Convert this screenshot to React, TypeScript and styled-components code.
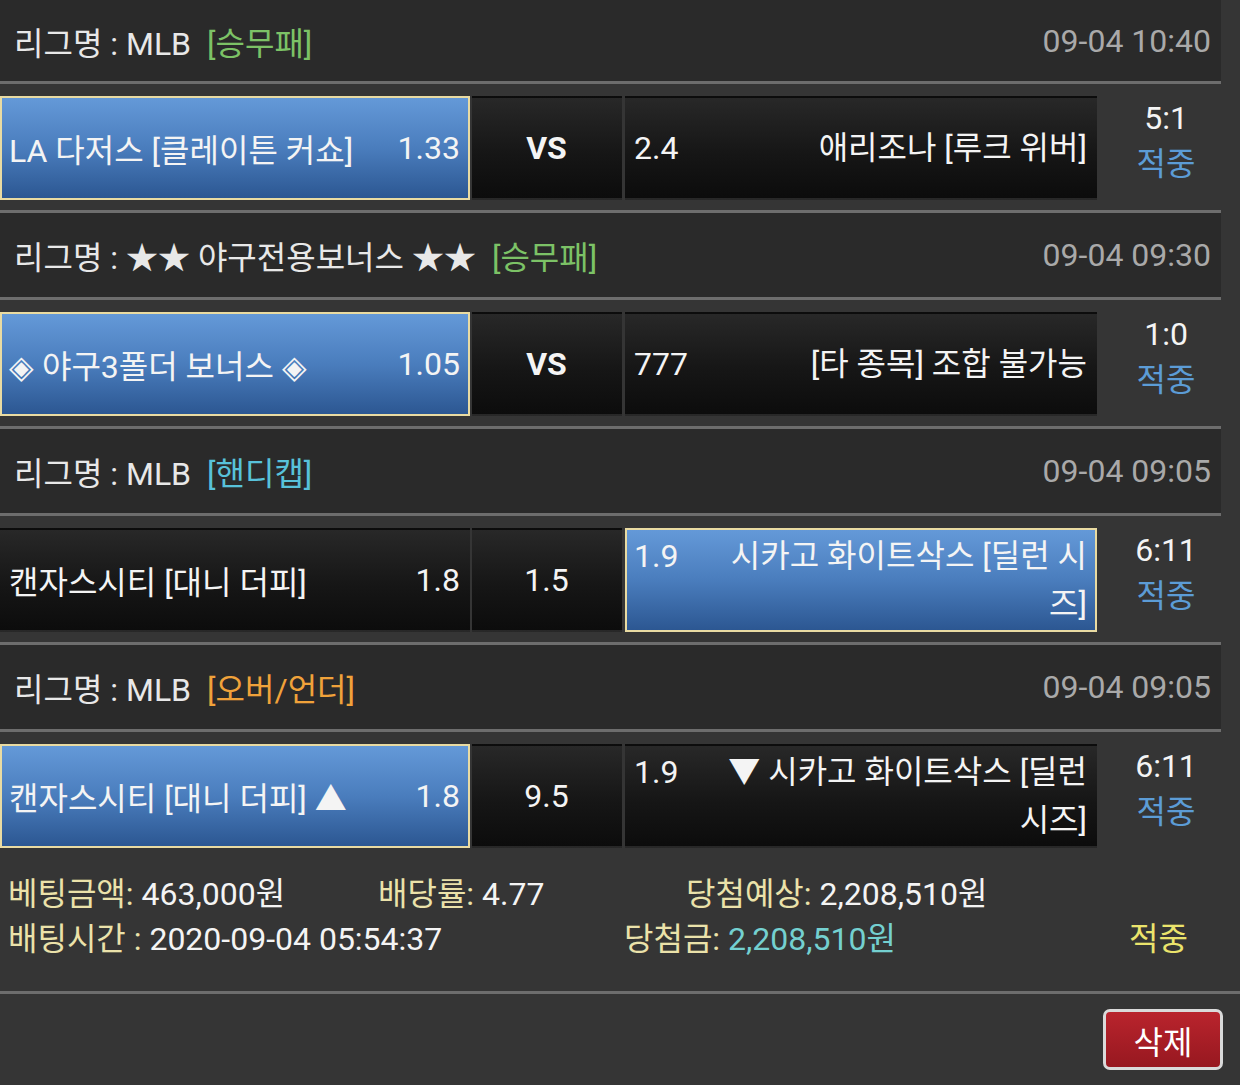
import React from "react";
import styled, { createGlobalStyle } from "styled-components";

interface Side {
  name: string;
  odds: string;
  selected?: boolean;
}

interface Game {
  league: string;
  type: string;
  typeColor: string;
  time: string;
  home: Side;
  mid: string;
  midBold?: boolean;
  away: Side;
  score: string;
}

const GAMES: Game[] = [
  {
    league: "리그명 : MLB",
    type: "[승무패]",
    typeColor: "#7cc266",
    time: "09-04 10:40",
    home: { name: "LA 다저스 [클레이튼 커쇼]", odds: "1.33", selected: true },
    mid: "VS",
    midBold: true,
    away: { name: "애리조나 [루크 위버]", odds: "2.4" },
    score: "5:1",
  },
  {
    league: "리그명 : ★★ 야구전용보너스 ★★",
    type: "[승무패]",
    typeColor: "#7cc266",
    time: "09-04 09:30",
    home: { name: "◈ 야구3폴더 보너스 ◈", odds: "1.05", selected: true },
    mid: "VS",
    midBold: true,
    away: { name: "[타 종목] 조합 불가능", odds: "777" },
    score: "1:0",
  },
  {
    league: "리그명 : MLB",
    type: "[핸디캡]",
    typeColor: "#58c2da",
    time: "09-04 09:05",
    home: { name: "캔자스시티 [대니 더피]", odds: "1.8" },
    mid: "1.5",
    away: { name: "시카고 화이트삭스 [딜런 시즈]", odds: "1.9", selected: true },
    score: "6:11",
  },
  {
    league: "리그명 : MLB",
    type: "[오버/언더]",
    typeColor: "#f0a23a",
    time: "09-04 09:05",
    home: { name: "캔자스시티 [대니 더피] ▲", odds: "1.8", selected: true },
    mid: "9.5",
    away: { name: "▼ 시카고 화이트삭스 [딜런 시즈]", odds: "1.9" },
    score: "6:11",
  },
];

export default function App(): JSX.Element {
  return (
    <Page>
      <GlobalStyle />
      <List>
        {GAMES.map((game, i) => (
          <GameBlock key={i}>
            <LeagueHeader>
              <LeagueName>
                {game.league}
                <BetType $color={game.typeColor}>{game.type}</BetType>
              </LeagueName>
              <GameTime>{game.time}</GameTime>
            </LeagueHeader>
            <MatchRow>
              <Cell $width={470} $selected={game.home.selected}>
                <HomeName>{game.home.name}</HomeName>
                <Odds>{game.home.odds}</Odds>
              </Cell>
              <Cell $width={150} $center>
                <MidText $bold={game.midBold}>{game.mid}</MidText>
              </Cell>
              <Cell $width={472} $selected={game.away.selected} $gapLeft>
                <AwayContent>
                  <AwayOdds>{game.away.odds}</AwayOdds>
                  <AwayName>{game.away.name}</AwayName>
                </AwayContent>
              </Cell>
              <ScoreBox>
                <Score>{game.score}</Score>
                <Result>적중</Result>
              </ScoreBox>
            </MatchRow>
          </GameBlock>
        ))}
      </List>

      <Summary>
        <SummaryLine>
          <SummaryItem $width={370}>
            <Label>베팅금액:</Label> 463,000원
          </SummaryItem>
          <SummaryItem $width={308}>
            <Label>배당률:</Label> 4.77
          </SummaryItem>
          <SummaryItem>
            <Label>당첨예상:</Label> 2,208,510원
          </SummaryItem>
        </SummaryLine>
        <SummaryLine>
          <SummaryItem $width={616}>
            <Label>배팅시간 :</Label> 2020-09-04 05:54:37
          </SummaryItem>
          <SummaryItem $width={505}>
            <Label>당첨금:</Label> <WinAmount>2,208,510원</WinAmount>
          </SummaryItem>
          <SummaryItem>
            <HitText>적중</HitText>
          </SummaryItem>
        </SummaryLine>
      </Summary>

      <Footer>
        <DeleteButton>삭제</DeleteButton>
      </Footer>
    </Page>
  );
}

const FONT = `Roboto, "Noto Sans CJK KR", sans-serif`;

const GlobalStyle = createGlobalStyle`
  html, body {
    margin: 0;
    padding: 0;
    background: #353535;
  }
  body {
    font-family: ${FONT};
    color: #f2f2f2;
    font-size: 32px;
  }
`;

const Page = styled.div`
  width: 1240px;
  min-height: 1085px;
  background: #353535;
  overflow: hidden;
`;

const List = styled.div`
  width: 1221px;
`;

const LeagueHeader = styled.div`
  height: 87px;
  box-sizing: border-box;
  background: #2a2a2a;
  border-bottom: 3px solid #6d6d6d;
  display: flex;
  align-items: center;
  justify-content: space-between;
  padding: 0 10px 0 14px;
`;

const GameBlock = styled.div`
  &:first-child ${LeagueHeader} {
    height: 84px;
  }
`;

const LeagueName = styled.div`
  color: #e8e8e8;
  white-space: nowrap;
`;

const BetType = styled.span<{ $color: string }>`
  color: ${(p) => p.$color};
  margin-left: 16px;
`;

const GameTime = styled.div`
  color: #a9a9a9;
`;

const MatchRow = styled.div`
  height: 129px;
  box-sizing: border-box;
  padding-top: 12px;
  display: flex;
  align-items: flex-start;
  gap: 2px;
  border-bottom: 3px solid #6d6d6d;

  ${GameBlock}:last-child & {
    border-bottom: none;
    height: 126px;
  }
`;

const Cell = styled.div<{
  $width: number;
  $selected?: boolean;
  $center?: boolean;
  $gapLeft?: boolean;
}>`
  width: ${(p) => p.$width}px;
  height: 104px;
  flex: none;
  box-sizing: border-box;
  display: flex;
  align-items: center;
  justify-content: ${(p) => (p.$center ? "center" : "space-between")};
  padding: 0 8px 0 7px;
  margin-left: ${(p) => (p.$gapLeft ? "1px" : "0")};
  border: 2px solid ${(p) => (p.$selected ? "#e9dba2" : "transparent")};
  background: ${(p) =>
    p.$selected
      ? "linear-gradient(to bottom, #6499d8 0%, #4a7dbd 50%, #2c5792 100%)"
      : "linear-gradient(to bottom, #282828 0%, #161616 55%, #0c0c0c 100%)"};
  color: #f4f4f4;
`;

const HomeName = styled.div`
  flex: 1;
  white-space: nowrap;
`;

const Odds = styled.div`
  flex: none;
  margin-left: 12px;
`;

const MidText = styled.div<{ $bold?: boolean }>`
  font-weight: ${(p) => (p.$bold ? 700 : 400)};
`;

const AwayContent = styled.div`
  flex: 1;
  display: flex;
  align-items: flex-start;
  line-height: 48px;
`;

const AwayOdds = styled.div`
  flex: none;
  width: 92px;
`;

const AwayName = styled.div`
  flex: 1;
  text-align: right;
`;

const ScoreBox = styled.div`
  flex: 1;
  display: flex;
  flex-direction: column;
  align-items: center;
  padding-left: 12px;
  margin-top: -1px;
  line-height: 46px;
`;

const Score = styled.div`
  color: #f4f4f4;
`;

const Result = styled.div`
  color: #5c9cd6;
`;

const Summary = styled.div`
  padding: 14px 0 29px 8px;
  border-bottom: 3px solid #6d6d6d;
`;

const SummaryLine = styled.div`
  display: flex;
  line-height: 45px;
  white-space: nowrap;
`;

const SummaryItem = styled.div<{ $width?: number }>`
  width: ${(p) => (p.$width ? `${p.$width}px` : "auto")};
  flex: none;
  color: #f4f4f4;
`;

const Label = styled.span`
  color: #ebe2aa;
`;

const WinAmount = styled.span`
  color: #74d0d0;
`;

const HitText = styled.span`
  color: #ebe46c;
`;

const Footer = styled.div`
  display: flex;
  justify-content: flex-end;
  padding: 15px 17px 0 0;
`;

const DeleteButton = styled.button`
  width: 120px;
  height: 61px;
  box-sizing: border-box;
  border: 3px solid #dadada;
  border-radius: 7px;
  background: linear-gradient(to bottom, #b9242d, #971820);
  color: #ffffff;
  font-family: ${FONT};
  font-size: 32px;
  padding: 0;
  cursor: pointer;
`;
